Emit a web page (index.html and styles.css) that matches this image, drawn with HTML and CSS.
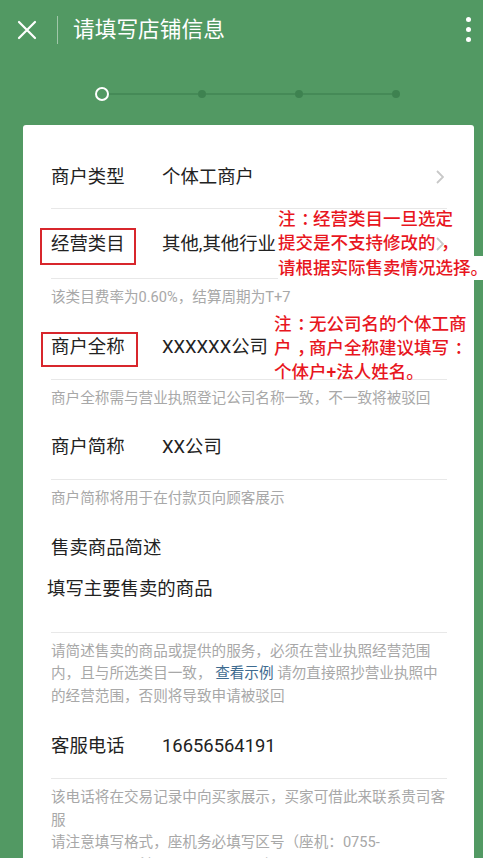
FILE: index.html
```html
<!DOCTYPE html>
<html lang="zh-CN">
<head>
<meta charset="utf-8">
<meta name="viewport" content="width=483">
<title>请填写店铺信息</title>
<link rel="stylesheet" href="styles.css">
</head>
<body>
<header class="topbar">
  <svg class="close" width="20" height="20" viewBox="0 0 20 20"><path d="M2 2 L18 18 M18 2 L2 18" stroke="#fff" stroke-width="2.2" stroke-linecap="round" fill="none"/></svg>
  <span class="divider"></span>
  <h1 class="title">请填写店铺信息</h1>
  <div class="more"><i></i><i></i><i></i></div>
</header>

<div class="steps">
  <span class="step-current"></span>
  <span class="step-line"></span>
  <span class="step-dot"></span>
  <span class="step-line"></span>
  <span class="step-dot"></span>
  <span class="step-line"></span>
  <span class="step-dot"></span>
</div>

<main class="card">
  <div class="row row-first">
    <span class="label">商户类型</span>
    <span class="value">个体工商户</span>
    <svg class="chevron" width="8" height="14" viewBox="0 0 8 14"><path d="M1 1 L7 7 L1 13" stroke="#c8c8c8" stroke-width="1.8" fill="none"/></svg>
  </div>
  <div class="row row-tall">
    <span class="label boxed box-a">经营类目</span>
    <span class="value">其他,其他行业</span>
    <svg class="chevron" width="8" height="14" viewBox="0 0 8 14"><path d="M1 1 L7 7 L1 13" stroke="#c8c8c8" stroke-width="1.8" fill="none"/></svg>
    <div class="note note-a"><span>注<span class="punc">：</span>经营类目一旦选定</span><span>提交是不支持修改的<span class="punc">，</span></span><span class="note-bg">请根据实际售卖情况选择。</span></div>
  </div>
  <p class="hint">该类目费率为0.60%，结算周期为T+7</p>
  <div class="row">
    <span class="label boxed box-b">商户全称</span>
    <span class="value">XXXXXX公司</span>
    <div class="note note-b"><span>注<span class="punc">：</span>无公司名的个体工商</span><span>户<span class="punc">，</span>商户全称建议填写<span class="punc">：</span></span><span>个体户+法人姓名。</span></div>
  </div>
  <p class="hint">商户全称需与营业执照登记公司名称一致，不一致将被驳回</p>
  <div class="row">
    <span class="label">商户简称</span>
    <span class="value">XX公司</span>
  </div>
  <p class="hint">商户简称将用于在付款页向顾客展示</p>
  <div class="desc">
    <div class="desc-label">售卖商品简述</div>
    <div class="desc-text">填写主要售卖的商品</div>
  </div>
  <p class="hint">请简述售卖的商品或提供的服务，必须在营业执照经营范围内，且与所选类目一致， <a class="link">查看示例</a> 请勿直接照抄营业执照中的经营范围，否则将导致申请被驳回</p>
  <div class="row row-phone">
    <span class="label">客服电话</span>
    <span class="value">16656564191</span>
  </div>
  <div class="hint">
    <p class="hint-line">该电话将在交易记录中向买家展示，买家可借此来联系贵司客服</p>
    <p class="hint-line">请注意填写格式，座机务必填写区号（座机：0755-88888888，手机：13800000000）</p>
  </div>
</main>
</body>
</html>
```
FILE: styles.css
```css
* { box-sizing: border-box; }

html, body {
  margin: 0;
  padding: 0;
}

body {
  background: #529963;
  font-family: Roboto, "Noto Sans CJK SC", "Noto Sans", sans-serif;
  color: #222;
  overflow: hidden;
}

.topbar {
  height: 57px;
  display: flex;
  align-items: center;
  padding: 0 12px 0 17px;
  margin-top: 1px;
}

.close { display: block; flex: none; }

.divider {
  width: 1px;
  height: 28px;
  margin-left: 20px;
  background: rgba(255, 255, 255, 0.45);
}

.title {
  margin: 0 0 0 15px;
  font-size: 21.7px;
  font-weight: 400;
  color: #fff;
  line-height: 28px;
}

.more {
  margin-left: auto;
  display: flex;
  flex-direction: column;
  gap: 4.7px;
}

.more i {
  display: block;
  width: 5px;
  height: 5px;
  border-radius: 50%;
  background: #fff;
}

.steps {
  display: flex;
  align-items: center;
  height: 14px;
  width: 305px;
  margin: 29px 0 24px 95px;
}

.step-current {
  width: 14px;
  height: 14px;
  border: 2.6px solid #fff;
  border-radius: 50%;
  flex: none;
}

.step-line {
  flex: 1;
  height: 2px;
  background: #458a57;
}

.step-dot {
  width: 8px;
  height: 8px;
  border-radius: 50%;
  background: #3e8250;
  flex: none;
}

.card {
  width: 451px;
  margin-left: 23px;
  background: #fff;
  border-radius: 3px 3px 0 0;
  padding: 20px 27px 40px 28px;
  min-height: 760px;
}

.row {
  position: relative;
  display: flex;
  align-items: center;
  height: 65px;
  border-bottom: 1px solid #e8e8e8;
}

.row-first { height: 64px; }
.row-tall { height: 70px; }

.label {
  width: 111px;
  flex: none;
  font-size: 18.4px;
  line-height: 24px;
  color: #222;
}

.boxed { position: relative; }

.boxed::after {
  content: "";
  position: absolute;
  border: 2px solid #d8262c;
}

.box-a::after { left: -11px; width: 92px; top: -4px; height: 33px; }
.box-b::after { left: -10px; width: 93px; top: -3px; height: 31px; }

.value {
  font-size: 18.4px;
  line-height: 24px;
  color: #222;
}

.chevron {
  margin-left: auto;
  margin-right: 3px;
  display: block;
}

.note {
  position: absolute;
  top: -2px;
  display: flex;
  flex-direction: column;
  font-size: 17.5px;
  line-height: 24.3px;
  font-weight: 500;
  color: #e8161e;
  white-space: nowrap;
}

.note-a { left: 227px; }
.note-b { left: 223px; top: -3px; }

.punc {
  display: inline-block;
  padding-left: 0.32em;
  margin-right: -0.32em;
}

.note-bg { background: #fff; align-self: flex-start; padding-right: 3px; }

.hint {
  margin: 0;
  padding: 7px 0 6px;
  font-size: 14.6px;
  line-height: 22.5px;
  color: #a8a8a8;
}

.hint-line { margin: 0; }

.link { color: #3d6b90; }

.desc {
  padding: 20px 0 31px;
  border-bottom: 1px solid #e8e8e8;
}

.desc-label {
  font-size: 18.4px;
  line-height: 24px;
}

.desc-text {
  margin: 17px 0 0 -4px;
  font-size: 18.4px;
  line-height: 24px;
}

.row-phone { margin-top: 1px; }
```
